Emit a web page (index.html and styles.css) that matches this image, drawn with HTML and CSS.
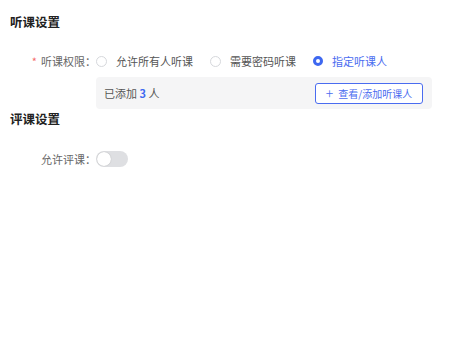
FILE: index.html
```html
<!DOCTYPE html>
<html>
<head>
  <meta charset='UTF-8'>
  <title>听课设置</title>
  <link rel="stylesheet" href="styles.css">
</head>
<body>
  <div class='page'>
    <h3 class='section-title'>听课设置</h3>
    <div class='form-row'>
      <label class='form-label'><span class='req'>*</span>听课权限：</label>
      <div class='radio-group'>
        <label class='radio'><span class='radio-dot'></span>允许所有人听课</label>
        <label class='radio'><span class='radio-dot'></span>需要密码听课</label>
        <label class='radio checked'><span class='radio-dot'></span>指定听课人</label>
      </div>
    </div>
    <div class='member-box'>
      <span class='member-count'>已添加 <b>3</b> 人</span>
      <button class='btn-outline'><span class='plus'>+</span>查看/添加听课人</button>
    </div>

    <h3 class='section-title'>评课设置</h3>
    <div class='form-row row-switch'>
      <label class='form-label'>允许评课：</label>
      <span class='switch'><span class='knob'></span></span>
    </div>
  </div>
</body>
</html>
```

FILE: styles.css
```css
body { margin: 0; background: #fff; font-family: "Noto Sans CJK SC", "Noto Sans", sans-serif; color: #555; }
.page { padding: 12px 10px; }
.section-title { margin: 0; font-size: 12.5px; line-height: 20px; font-weight: bold; color: #222; }
.form-row { display: flex; align-items: center; height: 20px; margin-top: 19px; font-size: 11px; }
.form-label { width: 86px; flex: none; text-align: right; color: #666; white-space: nowrap; }
.req { color: #f56c6c; margin-right: 4px; }
.radio-group { display: flex; align-items: center; gap: 17px; }
.radio { display: flex; align-items: center; color: #555; white-space: nowrap; }
.radio-dot { width: 9px; height: 9px; border: 1px solid #d6d8dc; border-radius: 50%; background: #fff; margin-right: 9px; box-sizing: content-box; }
.radio.checked { color: #4a6cf0; }
.radio.checked .radio-dot { background: #fff; border: 3.5px solid #3e68f0; width: 4px; height: 4px; }
.member-box { display: flex; align-items: center; justify-content: space-between; margin: 6px 0 0 86px; width: 336px; height: 32px; padding: 0 9px 0 8px; box-sizing: border-box; background: #f5f5f6; border-radius: 4px; font-size: 11px; color: #555; }
.member-count b { color: #3e68f0; font-weight: bold; }
.btn-outline { width: 108px; height: 21px; padding: 0; border: 1px solid #4a6cf0; border-radius: 3px; background: #fff; color: #4a6cf0; font-family: inherit; font-size: 10px; display: flex; align-items: center; justify-content: center; }
.plus { font-size: 14px; font-weight: 300; margin-right: 5px; line-height: 1; }
.row-switch { margin-top: 20px; }
.switch { width: 32px; height: 16px; border-radius: 8px; background: #dedfe2; position: relative; }
.knob { position: absolute; left: 1px; top: 1px; width: 14px; height: 14px; border-radius: 50%; background: #fff; box-shadow: 0 0 1px rgba(0,0,0,0.3); }
```
